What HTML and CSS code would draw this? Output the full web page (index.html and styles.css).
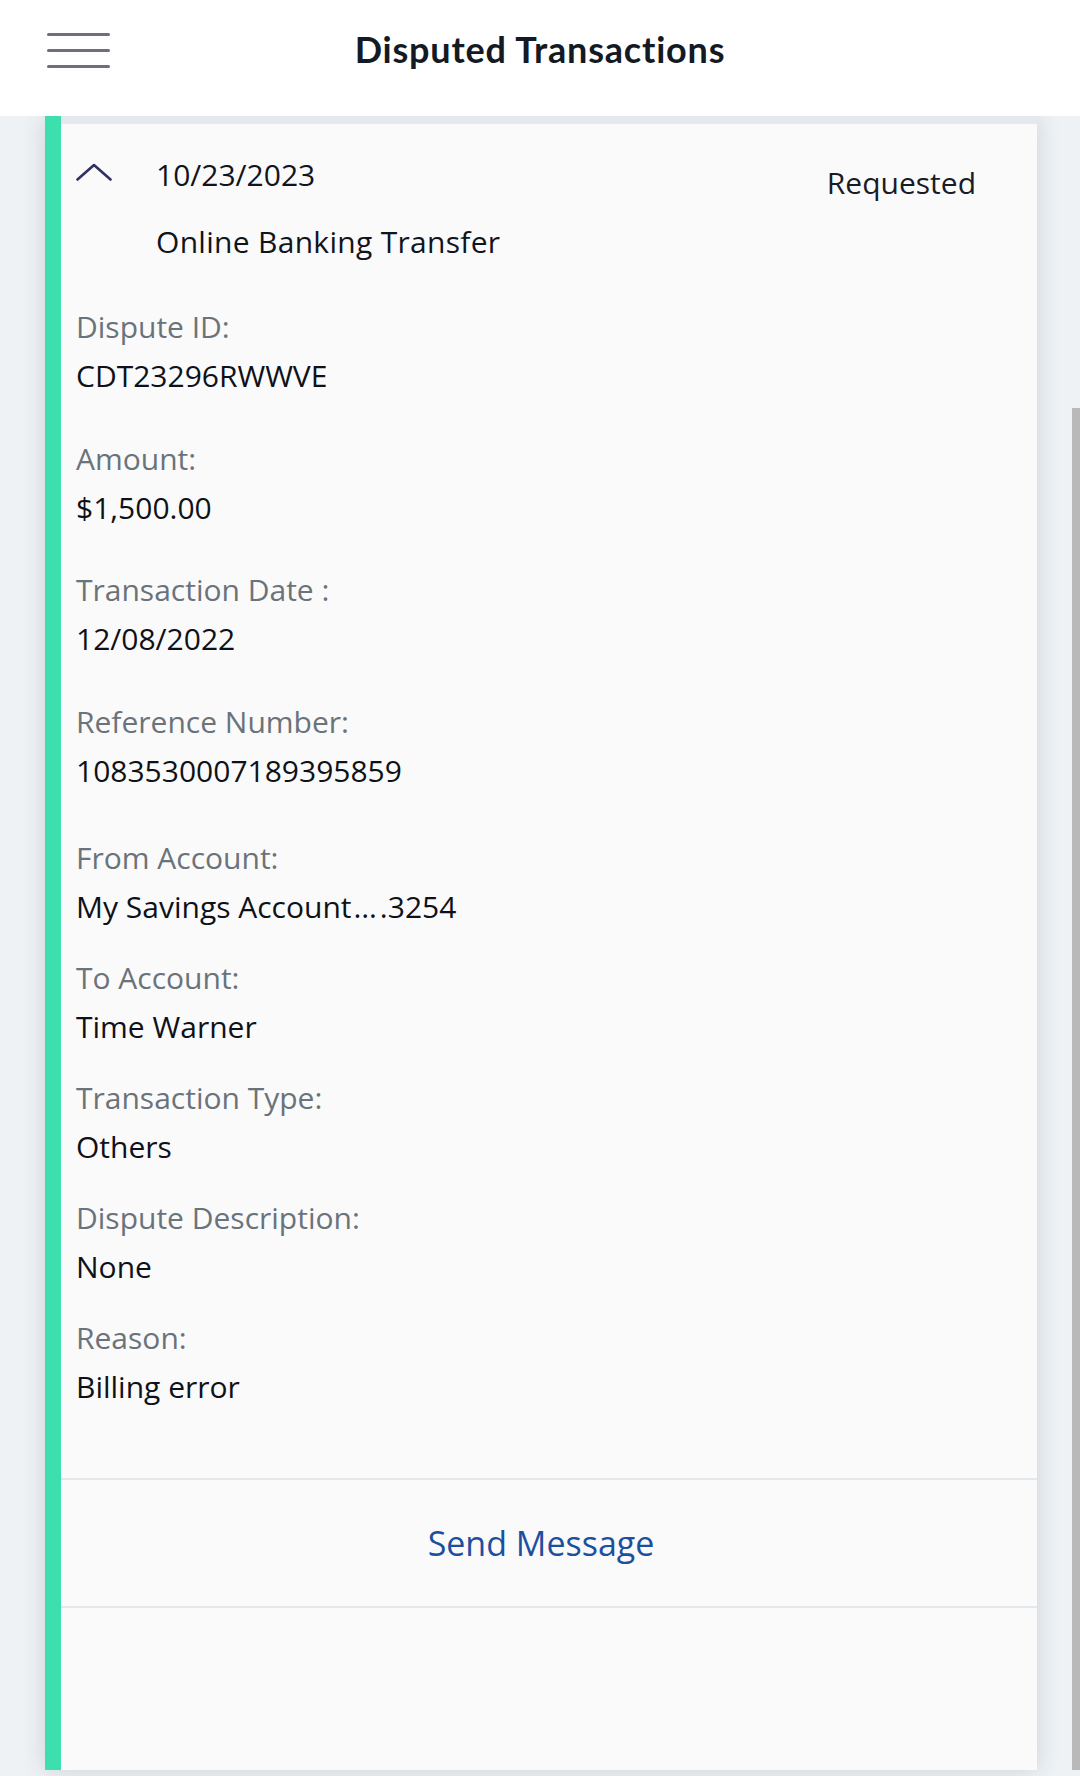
FILE: index.html
```html
<!DOCTYPE html>
<html lang="en">
<head>
<meta charset="utf-8">
<title>Disputed Transactions</title>
<link rel="stylesheet" href="styles.css">
</head>
<body>
<header class="topbar">
  <div class="menu" aria-label="Menu"><span></span><span></span><span></span></div>
  <h1 class="title">Disputed Transactions</h1>
  <div class="spacer"></div>
</header>
<main class="page">
  <section class="card">
    <div class="card-band"></div>
    <div class="card-body">
      <div class="summary">
        <svg class="chevron" width="36" height="18" viewBox="0 0 36 18" aria-hidden="true">
          <polyline points="1.5,16.5 18,2 34.5,16.5" fill="none" stroke="#2f3162" stroke-width="2.6" stroke-linecap="round" stroke-linejoin="round"/>
        </svg>
        <div class="summary-main">
          <div class="date">10/23/2023</div>
          <div class="kind">Online Banking Transfer</div>
        </div>
        <div class="status">Requested</div>
      </div>
      <div class="fields">
        <div class="field a"><div class="label">Dispute ID:</div><div class="value">CDT23296RWWVE</div></div>
        <div class="field a"><div class="label">Amount:</div><div class="value">$1,500.00</div></div>
        <div class="field a"><div class="label">Transaction Date :</div><div class="value">12/08/2022</div></div>
        <div class="field a last-a"><div class="label">Reference Number:</div><div class="value">1083530007189395859</div></div>
        <div class="field b"><div class="label">From Account:</div><div class="value">My Savings Account<span class="dots">…</span>.3254</div></div>
        <div class="field b"><div class="label">To Account:</div><div class="value">Time Warner</div></div>
        <div class="field b"><div class="label">Transaction Type:</div><div class="value">Others</div></div>
        <div class="field b"><div class="label">Dispute Description:</div><div class="value">None</div></div>
        <div class="field b"><div class="label">Reason:</div><div class="value">Billing error</div></div>
      </div>
    </div>
    <div class="divider"></div>
    <button class="send" type="button">Send Message</button>
    <div class="divider"></div>
    <div class="card-foot"></div>
  </section>
</main>
<div class="scrollbar"></div>
</body>
</html>
```

FILE: styles.css
```css
* { box-sizing: border-box; }

html, body {
  margin: 0;
  padding: 0;
}

body {
  width: 1080px;
  height: 1776px;
  overflow: hidden;
  background: #eef2f5;
  font-family: "Open Sans", "Noto Sans", Lato, sans-serif;
  color: #0f131a;
}

.topbar {
  position: relative;
  z-index: 2;
  height: 116px;
  background: #ffffff;
  display: grid;
  grid-template-columns: 1fr auto 1fr;
  align-items: start;
  padding: 28px 47px 0 47px;
}

.menu {
  margin-top: 5px;
  width: 63px;
  display: flex;
  flex-direction: column;
  gap: 13px;
}

.menu span {
  display: block;
  height: 3px;
  border-radius: 2px;
  background: #6f6f7b;
}

.title {
  margin: 0;
  font-family: Lato, "Open Sans", sans-serif;
  font-size: 36px;
  line-height: 42px;
  font-weight: 700;
  color: #141a24;
  letter-spacing: 0.8px;
}

.page {
  height: 1660px;
}

.card {
  position: relative;
  z-index: 1;
  margin-left: 45px;
  width: 992px;
  height: 1654px;
  border-left: 16px solid #3ddfae;
  background: #fafafb;
  box-shadow: 0 0 22px rgba(40, 50, 60, 0.16);
  display: flex;
  flex-direction: column;
}

.card-band {
  height: 8px;
  background: #e5e9ed;
  flex: none;
}

.card-body {
  padding: 26px 61px 67px 15px;
  font-size: 30px;
}

.summary {
  display: flex;
  align-items: flex-start;
}

.chevron {
  flex: none;
  margin-top: 13px;
  margin-right: 44px;
}

.summary-main {
  flex: 1;
}

.date,
.kind,
.status {
  line-height: 49px;
  color: #10141c;
}

.kind {
  margin-top: 18px;
  letter-spacing: 0.3px;
}

.status {
  margin-top: 8px;
  color: #181c26;
}

.fields {
  margin-top: 36px;
}

.label {
  color: #6a737a;
  line-height: 49px;
}

.value {
  color: #0e1218;
  line-height: 49px;
}

.dots {
  letter-spacing: 3px;
  margin-left: 2px;
}

.field.a {
  margin-bottom: 33.5px;
}

.field.a.last-a {
  margin-bottom: 39px;
}

.field.b {
  margin-bottom: 23px;
}

.field.b .label {
  line-height: 48px;
}

.field.b:last-child {
  margin-bottom: 0;
}

.divider {
  height: 2px;
  background: #e3e7ec;
  flex: none;
}

.send {
  display: block;
  width: 100%;
  height: 126px;
  padding: 0 16px 0 0;
  border: none;
  background: transparent;
  font-family: "Open Sans", "Noto Sans", sans-serif;
  font-size: 34px;
  line-height: 126px;
  color: #1d4f9f;
  text-align: center;
  flex: none;
}

.card-foot {
  flex: 1;
}

.scrollbar {
  position: fixed;
  right: 0;
  top: 408px;
  width: 8px;
  height: 1362px;
  background: #b9b9b9;
  z-index: 3;
}
```
